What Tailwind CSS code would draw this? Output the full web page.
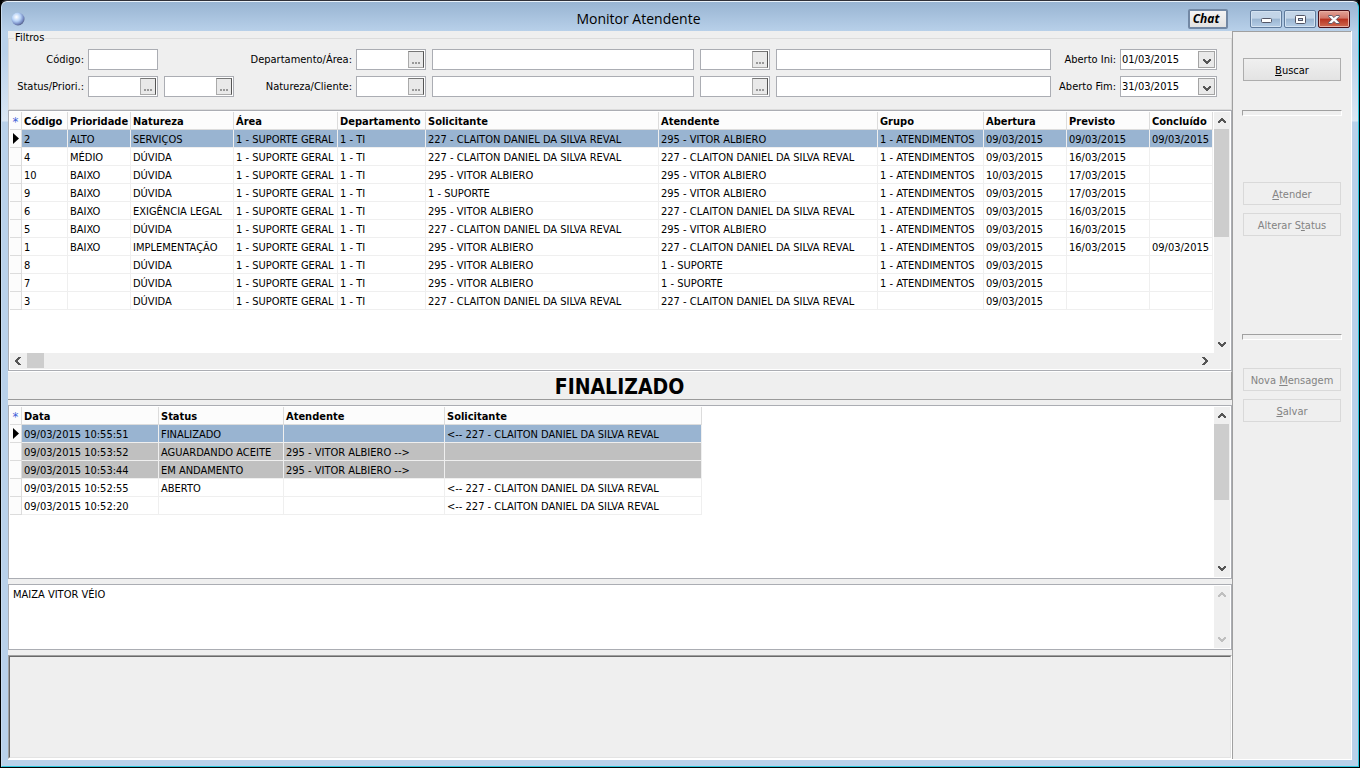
<!DOCTYPE html>
<html lang="pt-BR">
<head>
<meta charset="utf-8">
<title>Monitor Atendente</title>
<script src="https://cdn.jsdelivr.net/npm/@tailwindcss/browser@4"></script>
</head>
<body class="bg-black">
<svg class="hidden">
  <symbol id="down" viewBox="0 0 8 6"><path d="M0 0h2v1h1v1h2V1h1V0h2v2H7v1H6v1H5v1H3V4H2V3H1V2H0z" shape-rendering="crispEdges"/></symbol>
  <symbol id="up" viewBox="0 0 8 6"><path d="M3 0h2v1h1v1h1v1h1v2H6V4H5V3H3v1H2v1H0V3h1V2h1V1h1z" shape-rendering="crispEdges"/></symbol>
  <symbol id="left" viewBox="0 0 6 8"><path d="M3 0h3v1H5v1H4v1H3v2h1v1h1v1h1v1H3V7H2V6H1V5H0V3h1V2h1V1h1z" shape-rendering="crispEdges"/></symbol>
  <symbol id="right" viewBox="0 0 6 8"><path d="M0 0h3v1h1v1h1v1h1v2H5v1H4v1H3v1H0V7h1V6h1V5h1V3H2V2H1V1H0z" shape-rendering="crispEdges"/></symbol>
</svg>

<div class="flex min-h-screen flex-col rounded-t-md border border-r-black border-b-black border-l-black border-t-[#2f3038] bg-black font-['DejaVu_Sans_Condensed','DejaVu_Sans',sans-serif] text-[11px] leading-[14px] text-black">
 <div class="flex flex-1 flex-col rounded-t-md border-t border-r border-b border-l border-t-[#e9f1f9] border-r-[#2cc6dc] border-b-[#2cc6dc] border-l-[#c9dcef] bg-[linear-gradient(#98b4d2_0px,#b9d1ea_30px,#b9d1ea_50px,#dbe7f4_119px,#b9d1ea_120px,#b9d1ea_100%)]">

  <header class="relative flex h-[29px] items-center pr-[8px] pl-[9px]">
    <svg class="mt-1 size-[14px]" viewBox="0 0 14 14"><defs><radialGradient id="orb" cx=".38" cy=".35" r=".65"><stop offset="0" stop-color="#fff"/><stop offset=".5" stop-color="#b4d0f6"/><stop offset=".85" stop-color="#7488c0"/><stop offset="1" stop-color="#5a6690"/></radialGradient></defs><circle cx="7" cy="7" r="6.5" fill="url(#orb)"/></svg>
    <h1 class="flex-1 pt-[5px] pl-[64px] text-center font-['Open_Sans','Noto_Sans',sans-serif] text-[14px] leading-[20px]">Monitor Atendente</h1>
    <button class="mt-[5px] mr-[22px] h-5 w-10 rounded-[2px] border-2 border-[#7288a4] bg-[linear-gradient(#f4f4f4,#e2e2e2)] pr-1 font-['Open_Sans',sans-serif] text-[12px] leading-[14px] font-bold italic">Chat</button>
    <div class="mt-[5px] flex gap-[2px]">
      <button aria-label="Minimizar" class="flex h-[18px] w-8 items-center justify-center rounded-[2px] border border-[#5f7a9b] bg-[linear-gradient(#c3d5e8_45%,#9ab5d1_50%,#b5cde6)] shadow-[inset_0_0_0_1px_#d3e2f1]"><svg class="mt-[3px] h-[5px] w-[11px]" viewBox="0 0 11 5"><rect x=".5" y=".5" width="10" height="4" rx="1" fill="#fff" stroke="#535666"/></svg></button>
      <button aria-label="Restaurar" class="flex h-[18px] w-8 items-center justify-center rounded-[2px] border border-[#5f7a9b] bg-[linear-gradient(#c3d5e8_45%,#9ab5d1_50%,#b5cde6)] shadow-[inset_0_0_0_1px_#d3e2f1]"><svg class="h-[9px] w-[11px]" viewBox="0 0 11 9"><rect x=".5" y=".5" width="10" height="8" rx="1" fill="#fff" stroke="#535666"/><rect x="3.5" y="3.5" width="4" height="2" fill="#b5cde6" stroke="#535666"/></svg></button>
      <button aria-label="Fechar" class="flex h-[18px] w-8 items-center justify-center rounded-[2px] border border-[#4a1018] bg-[linear-gradient(#e2a397,#d27668_45%,#b8321f_50%,#cf6a50)] shadow-[inset_0_0_0_1px_#eab0a4]"><svg class="h-[9px] w-[12px]" viewBox="0 0 12 9"><path d="M.7.5h3.2L6 2.6 8.1.5h3.2v1L8.3 4.5l3 3v1H8.1L6 6.4 3.9 8.5H.7v-1l3-3-3-3z" fill="#fff" stroke="#535666" stroke-width=".9"/></svg></button>
    </div>
  </header>

  <div class="mr-[6px] mb-[6px] ml-[6px] flex flex-1 border-r border-b border-white bg-[#efefef]">
    <main class="flex min-w-0 flex-1 flex-col">

      <fieldset class="h-[79px] border border-[#dcdcdc] pb-[12px]">
        <legend class="ml-[5px] px-px">Filtros</legend>
        <form class="grid grid-cols-[79px_76px_76px_116px_76px_minmax(0,268fr)_76px_minmax(0,281fr)_63px_97px] gap-y-[6px] pt-1 pr-[14px] [&_input]:min-w-0 [&_input]:flex-1 [&_input]:bg-transparent [&_input]:outline-none [&_label]:self-center [&_label]:pr-1 [&_label]:text-right [&_label]:whitespace-nowrap">
          <label for="codigo">Código:</label>
          <div class="mr-[6px] flex h-[21px] border border-[#abadb3] bg-white"><input id="codigo"></div>
          <span></span>
          <label for="depto">Departamento/Área:</label>
          <div class="lk mr-[6px] flex h-[21px] border border-[#abadb3] bg-white p-px"><input id="depto"></div>
          <div class="mr-[6px] flex h-[21px] border border-[#abadb3] bg-white"><input aria-label="Descrição do departamento"></div>
          <div class="lk mr-[6px] flex h-[21px] border border-[#abadb3] bg-white p-px"><input aria-label="Área"></div>
          <div class="mr-[6px] flex h-[21px] border border-[#abadb3] bg-white"><input aria-label="Descrição da área"></div>
          <label for="ini">Aberto Ini:</label>
          <div class="dt flex h-[21px] border border-[#abadb3] bg-white p-px"><input id="ini" value="01/03/2015"></div>

          <label for="status">Status/Priori.:</label>
          <div class="lk mr-[6px] flex h-[21px] border border-[#abadb3] bg-white p-px"><input id="status"></div>
          <div class="lk mr-[6px] flex h-[21px] border border-[#abadb3] bg-white p-px"><input aria-label="Prioridade"></div>
          <label for="nat">Natureza/Cliente:</label>
          <div class="lk mr-[6px] flex h-[21px] border border-[#abadb3] bg-white p-px"><input id="nat"></div>
          <div class="mr-[6px] flex h-[21px] border border-[#abadb3] bg-white"><input aria-label="Descrição da natureza"></div>
          <div class="lk mr-[6px] flex h-[21px] border border-[#abadb3] bg-white p-px"><input aria-label="Cliente"></div>
          <div class="mr-[6px] flex h-[21px] border border-[#abadb3] bg-white"><input aria-label="Nome do cliente"></div>
          <label for="fim">Aberto Fim:</label>
          <div class="dt flex h-[21px] border border-[#abadb3] bg-white p-px"><input id="fim" value="31/03/2015"></div>
        </form>
      </fieldset>

      <section class="flex h-[261px] flex-col border border-[#abadb3] bg-white p-px">
        <div class="flex min-h-0 flex-1">
          <div class="min-w-0 flex-1 overflow-hidden pr-px">
            <table id="g1" class="w-full table-fixed border-separate border-spacing-0 text-left whitespace-nowrap">
              <colgroup><col class="w-[12px]"><col class="w-[46px]"><col class="w-[63px]"><col class="w-[103px]"><col class="w-[104px]"><col class="w-[88px]"><col class="w-[233px]"><col class="w-[219px]"><col class="w-[106px]"><col class="w-[83px]"><col class="w-[83px]"><col></colgroup>
            </table>
          </div>
          <div class="flex w-4 flex-col items-center bg-[#efefef] fill-[#555] pr-px">
            <svg class="my-[6px] h-[5px] w-2 shrink-0"><use href="#up" width="8" height="6"/></svg>
            <div class="h-[108px] w-full bg-[#cdcdcd]"></div>
            <svg class="mt-auto mb-[6px] h-[5px] w-2"><use href="#down" width="8" height="6"/></svg>
          </div>
        </div>
        <div class="flex h-4 items-center bg-[#efefef] pb-px pl-[5px] fill-[#555]">
          <svg class="h-2 w-[6px]"><use href="#left" width="6" height="8"/></svg>
          <div class="ml-[6px] h-[15px] w-[17px] bg-[#cdcdcd]"></div>
          <svg class="mr-[22px] ml-auto h-2 w-[6px]"><use href="#right" width="6" height="8"/></svg>
        </div>
      </section>

      <div class="h-[29px] border-t border-r border-b border-t-white border-r-[#9a9a9a] border-b-[#9a9a9a] pt-[2px] text-center text-[21px] leading-[26px] font-bold">FINALIZADO</div>

      <section class="mt-[5px] flex h-[174px] border border-[#abadb3] bg-white p-px">
        <div class="min-w-0 flex-1 overflow-hidden">
          <table id="g2" class="w-[692px] table-fixed border-separate border-spacing-0 text-left whitespace-nowrap">
            <colgroup><col class="w-[12px]"><col class="w-[137px]"><col class="w-[125px]"><col class="w-[161px]"><col class="w-[257px]"></colgroup>
          </table>
        </div>
        <div class="flex w-4 flex-col items-center bg-[#efefef] fill-[#555] pr-px">
          <svg class="my-[6px] h-[5px] w-2 shrink-0"><use href="#up" width="8" height="6"/></svg>
          <div class="h-[76px] w-full bg-[#cdcdcd]"></div>
          <svg class="mt-auto mb-[6px] h-[5px] w-2"><use href="#down" width="8" height="6"/></svg>
        </div>
      </section>

      <section class="mt-[5px] flex h-[66px] border border-[#abadb3] bg-white p-px">
        <textarea aria-label="Mensagem" class="min-w-0 flex-1 resize-none overflow-hidden px-[3px] pt-[2px] outline-none">MAIZA VITOR VÉIO</textarea>
        <div class="flex w-4 flex-col items-center justify-between bg-[#efefef] fill-[#bfbfbf] py-[6px] pr-px">
          <svg class="h-[5px] w-2"><use href="#up" width="8" height="6"/></svg>
          <svg class="h-[5px] w-2"><use href="#down" width="8" height="6"/></svg>
        </div>
      </section>

      <section class="mt-[5px] flex min-h-[100px] flex-1 border border-t-[#a0a0a0] border-r-white border-b-white border-l-[#a0a0a0]"><div class="flex-1 border border-t-[#696969] border-r-[#e3e3e3] border-b-[#e3e3e3] border-l-[#696969]"></div></section>
    </main>

    <aside class="flex w-[119px] flex-col border-t border-l border-[#a0a0a0] px-[10px] pt-[26px] [&_button]:h-[23px] [&_button]:border [&_button]:pt-[2px]">
      <button class="border-[#adadad] bg-[linear-gradient(#f0f0f0,#e3e3e3)]"><u>B</u>uscar</button>
      <div class="mt-[29px] -mr-px -ml-px h-[6px] border border-t-[#a0a0a0] border-r-white border-b-white border-l-[#a0a0a0]"></div>
      <button disabled class="mt-[66px] border-[#d9d9d9] text-[#838383]"><u>A</u>tender</button>
      <button disabled class="mt-2 border-[#d9d9d9] text-[#838383]">Alterar S<u>t</u>atus</button>
      <div class="mt-[98px] -mr-px -ml-px h-[6px] border border-t-[#a0a0a0] border-r-white border-b-white border-l-[#a0a0a0]"></div>
      <button disabled class="mt-[28px] border-[#d9d9d9] text-[#838383]">Nova <u>M</u>ensagem</button>
      <button disabled class="mt-2 border-[#d9d9d9] text-[#838383]"><u>S</u>alvar</button>
    </aside>
  </div>
 </div>
</div>

<script>
  document.querySelectorAll('.lk').forEach(e => e.insertAdjacentHTML('beforeend',
    '<button type="button" aria-label="Pesquisar" class="flex h-[17px] w-4 items-end justify-center gap-px border border-t-[#777] border-r-[#555] border-b-[#aaa] border-l-[#aaa] bg-[#e9e9e9] pb-[3px]"><i class="size-[2px] bg-[#999]"></i><i class="size-[2px] bg-[#999]"></i><i class="size-[2px] bg-[#999]"></i></button>'));
  document.querySelectorAll('.dt').forEach(e => e.insertAdjacentHTML('beforeend',
    '<button type="button" aria-label="Abrir calendário" class="flex h-[17px] w-[17px] items-center justify-center border border-[#a4a4a4] bg-[#e9e9e9] fill-[#555]"><svg class="mt-[3px] h-[5px] w-2"><use href="#down" width="8" height="6"/></svg></button>'));

  const TH = 'h-[18px] border-r border-b border-[#dcdcdc] bg-[#fcfcfc] p-0 pt-[2px] pl-[2px] leading-[15px] font-bold';
  const TD = 'h-[18px] overflow-hidden border-r border-b border-[#efefef] p-0 pt-[2px] pl-[2px] leading-[15px]';
  const BG = { s: 'bg-[#99b4d1]', g: 'bg-[#c0c0c0]', '': 'bg-white' };
  function fill(id, head, rows) {
    let h = '<thead><tr><th class="h-[18px] border-r border-b border-[#dcdcdc] bg-[#fcfcfc] p-0 pt-[2px] text-center text-[13px] leading-[15px] font-normal text-[#3f5fd8]">*</th>' +
      head.map(t => `<th class="${TH}">${t}</th>`).join('') + '</tr></thead><tbody>';
    for (const [kind, ...cells] of rows) {
      const mark = kind === 's' ? '<svg class="ml-[3px] h-[11px] w-[6px]" viewBox="0 0 6 11"><path d="M0 0l6 5.5L0 11z"/></svg>' : '';
      h += `<tr><td class="h-[18px] border-r border-b border-[#dcdcdc] bg-[#fcfcfc] p-0">${mark}</td>` +
        cells.map(t => `<td class="${TD} ${BG[kind]}">${t.replace(/</g, '&lt;')}</td>`).join('') + '</tr>';
    }
    document.getElementById(id).insertAdjacentHTML('beforeend', h + '</tbody>');
  }
  const C = '227 - CLAITON DANIEL DA SILVA REVAL', V = '295 - VITOR ALBIERO', G = '1 - SUPORTE GERAL', T = '1 - TI', A = '1 - ATENDIMENTOS', D = '09/03/2015', S = '1 - SUPORTE';
  fill('g1', ['Código', 'Prioridade', 'Natureza', 'Área', 'Departamento', 'Solicitante', 'Atendente', 'Grupo', 'Abertura', 'Previsto', 'Concluído'], [
    ['s', '2', 'ALTO', 'SERVIÇOS', G, T, C, V, A, D, D, D],
    ['', '4', 'MÉDIO', 'DÚVIDA', G, T, C, C, A, D, '16/03/2015', ''],
    ['', '10', 'BAIXO', 'DÚVIDA', G, T, V, V, A, '10/03/2015', '17/03/2015', ''],
    ['', '9', 'BAIXO', 'DÚVIDA', G, T, S, V, A, D, '17/03/2015', ''],
    ['', '6', 'BAIXO', 'EXIGÊNCIA LEGAL', G, T, V, C, A, D, '16/03/2015', ''],
    ['', '5', 'BAIXO', 'DÚVIDA', G, T, C, V, A, D, '16/03/2015', ''],
    ['', '1', 'BAIXO', 'IMPLEMENTAÇÃO', G, T, V, C, A, D, '16/03/2015', D],
    ['', '8', '', 'DÚVIDA', G, T, V, S, A, D, '', ''],
    ['', '7', '', 'DÚVIDA', G, T, V, S, A, D, '', ''],
    ['', '3', '', 'DÚVIDA', G, T, C, C, '', D, '', '']
  ]);
  fill('g2', ['Data', 'Status', 'Atendente', 'Solicitante'], [
    ['s', D + ' 10:55:51', 'FINALIZADO', '', '<-- ' + C],
    ['g', D + ' 10:53:52', 'AGUARDANDO ACEITE', V + ' -->', ''],
    ['g', D + ' 10:53:44', 'EM ANDAMENTO', V + ' -->', ''],
    ['', D + ' 10:52:55', 'ABERTO', '', '<-- ' + C],
    ['', D + ' 10:52:20', '', '', '<-- ' + C]
  ]);
</script>
</body>
</html>
